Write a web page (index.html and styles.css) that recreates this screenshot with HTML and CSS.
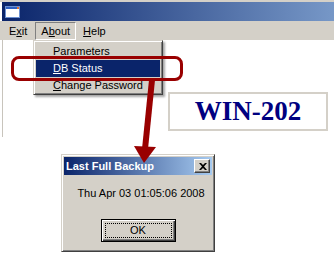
FILE: index.html
```html
<!DOCTYPE html>
<html>
<head>
<meta charset="utf-8">
<link rel="stylesheet" href="styles.css">
</head>
<body>
<div class="window">
  <div class="titlebar">
    <svg class="appicon" width="15" height="12" viewBox="0 0 15 12">
      <rect x="0.5" y="0.5" width="14" height="11" fill="#ffffff" stroke="#6b8fd0"/>
      <rect x="1" y="1" width="13" height="2" fill="#2f5fc0"/>
      <rect x="12" y="1" width="2" height="2" fill="#e07030"/>
    </svg>
  </div>
  <div class="menubar">
    <span class="mitem">E<u>x</u>it</span>
    <span class="mitem open">A<u>b</u>out</span>
    <span class="mitem"><u>H</u>elp</span>
  </div>
  <div class="client">
    <div class="hostbox">WIN-202</div>
  </div>
</div>

<div class="dropdown">
  <div class="ditem">Parameters</div>
  <div class="ditem sel"><u>D</u>B Status</div>
  <div class="ditem"><u>C</u>hange Password</div>
</div>

<div class="callout"></div>

<svg class="arrow" width="334" height="254" viewBox="0 0 334 254">
  <line x1="152" y1="80" x2="145" y2="149" stroke="#990000" stroke-width="6"/>
  <polygon points="134,146 156,147 144,163" fill="#990000"/>
</svg>

<div class="dialog">
  <div class="dtitle">
    <span class="dtitletext">Last Full Backup</span>
    <span class="closebtn">
      <svg width="8" height="7" viewBox="0 0 8 7">
        <path d="M0 0h2l2 2 2-2h2L5 3.5 8 7H6L4 5 2 7H0l3-3.5z" fill="#000"/>
      </svg>
    </span>
  </div>
  <div class="dbody">
    <div class="dmsg">Thu Apr 03 01:05:06 2008</div>
    <div class="okbtn"><span class="okfocus">OK</span></div>
  </div>
</div>
</body>
</html>
```

FILE: styles.css
```css
html, body {
  margin: 0;
  padding: 0;
}
body {
  width: 334px;
  height: 254px;
  overflow: hidden;
  background: #ffffff;
  position: relative;
  font-family: "Liberation Sans", Arial, sans-serif;
  font-size: 11px;
  color: #000;
}
.window {
  border-top: 2px solid #d4d0c8;
}
.titlebar {
  height: 19px;
  margin-left: 2px;
  background: linear-gradient(to right, #0a246a 0, #a6caf0 477px);
  display: flex;
  align-items: center;
  padding-left: 3px;
}
.appicon {
  display: block;
  margin-top: 1px;
}
.menubar {
  height: 19px;
  background: #d4d0c8;
  display: flex;
  align-items: flex-start;
  padding-left: 2px;
  padding-top: 1px;
  box-sizing: border-box;
}
.mitem {
  display: block;
  height: 18px;
  line-height: 17px;
  padding: 0 6px;
  box-sizing: border-box;
  border: 1px solid transparent;
}
.mitem.open {
  border-color: #808080 #ffffff #ffffff #808080;
  margin-left: 1px;
  padding: 0 5px 0 5px;
}
.client {
  height: 97px;
  margin-left: 2px;
  border-left: 1px solid #c8c4bc;
  padding-top: 52px;
  box-sizing: border-box;
}
.hostbox {
  margin-left: 165px;
  width: 160px;
  height: 39px;
  box-sizing: border-box;
  border: 2px solid #d4d0c8;
  background: #fff;
  color: #000080;
  font-family: "Liberation Serif", "Times New Roman", serif;
  font-weight: bold;
  font-size: 27px;
  line-height: 35px;
  text-align: center;
}
.dropdown {
  position: absolute;
  left: 33px;
  top: 40px;
  width: 130px;
  height: 55px;
  box-sizing: border-box;
  background: #d4d0c8;
  border: 1px solid;
  border-color: #d4d0c8 #404040 #404040 #d4d0c8;
  box-shadow: inset 1px 1px 0 #ffffff, inset -1px -1px 0 #808080, 2px 2px 2px rgba(0,0,0,0.35);
  padding: 2px 2px;
}
.ditem {
  height: 17px;
  line-height: 17px;
  padding-left: 17px;
}
.ditem.sel {
  background: #0a246a;
  color: #ffffff;
}
.callout {
  position: absolute;
  left: 11px;
  top: 56px;
  width: 172px;
  height: 25px;
  box-sizing: border-box;
  border: 3px solid #990000;
  border-radius: 8px;
}
.arrow {
  position: absolute;
  left: 0;
  top: 0;
  z-index: 3;
}
.dialog {
  position: absolute;
  left: 61px;
  top: 154px;
  width: 154px;
  height: 98px;
  box-sizing: border-box;
  background: #d4d0c8;
  border: 1px solid;
  border-color: #d4d0c8 #404040 #404040 #d4d0c8;
  box-shadow: inset 1px 1px 0 #ffffff, inset -1px -1px 0 #808080;
  padding: 2px;
  z-index: 2;
}
.dtitle {
  height: 18px;
  background: linear-gradient(to right, #0a246a, #a6caf0);
  display: flex;
  align-items: center;
  justify-content: space-between;
  padding: 0 2px 0 2px;
}
.dtitletext {
  color: #ffffff;
  font-weight: bold;
  font-size: 11px;
}
.closebtn {
  width: 16px;
  height: 14px;
  box-sizing: border-box;
  background: #d4d0c8;
  border: 1px solid;
  border-color: #ffffff #404040 #404040 #ffffff;
  box-shadow: inset -1px -1px 0 #808080;
  display: flex;
  align-items: center;
  justify-content: center;
  padding-left: 1px;
}
.closebtn svg {
  display: block;
}
.dbody {
  display: flex;
  flex-direction: column;
  align-items: center;
}
.dmsg {
  margin-top: 11px;
  padding-left: 6px;
  line-height: 14px;
}
.okbtn {
  margin-top: 19px;
  width: 75px;
  height: 23px;
  box-sizing: border-box;
  border: 1px solid #000;
  box-shadow: inset 1px 1px 0 #ffffff, inset -1px -1px 0 #404040, inset -2px -2px 0 #808080;
  padding: 3px;
  display: flex;
}
.okfocus {
  flex: 1;
  border: 1px dotted #000;
  text-align: center;
  line-height: 13px;
}
```
